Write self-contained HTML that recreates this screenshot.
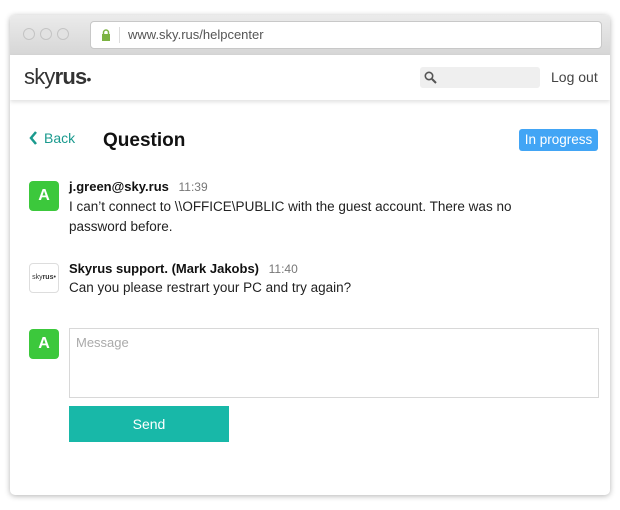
<!DOCTYPE html>
<html><head><style>
*{box-sizing:border-box;margin:0;padding:0}
body{width:620px;height:510px;background:#fff;font-family:"Liberation Sans",sans-serif;position:relative;overflow:hidden}
.win{position:absolute;left:10px;top:15px;width:600px;height:480px;background:#fff;border-radius:5px;box-shadow:0 1px 6px rgba(0,0,0,.3);overflow:hidden}
.tb{position:absolute;left:0;top:0;width:600px;height:40px;background:linear-gradient(#ebebeb,#d6d6d6)}
.dot{position:absolute;top:13px;width:12px;height:12px;border-radius:50%;border:1px solid #c4c4c4;background:#e2e2e2}
.addr{position:absolute;left:80px;top:6px;width:512px;height:28px;background:#fff;border:1px solid #c8c8c8;border-radius:4px;font-size:13px;color:#555;line-height:26px;padding-left:37px}
.hdr{position:absolute;left:0;top:40px;width:600px;height:45px;background:#fff;box-shadow:0 2px 4px rgba(0,0,0,.12)}
.t{position:absolute;white-space:nowrap}
.av{position:absolute;width:30px;height:30px;border-radius:4px;background:#3cc83c;color:#fff;font-weight:bold;font-size:16px;text-align:center;line-height:30px}
</style></head><body>
<div class="win">
<div class="tb">
<div class="dot" style="left:13px"></div><div class="dot" style="left:30px"></div><div class="dot" style="left:47px"></div>
<div class="addr">www.sky.rus/helpcenter
<svg style="position:absolute;left:10px;top:7px" width="10" height="12"><path d="M2.5 5V3.5a2.5 2.5 0 015 0V5" stroke="#7cb342" stroke-width="1.5" fill="none"/><rect x="1" y="5" width="8" height="7" fill="#7cb342"/></svg>
<div style="position:absolute;left:28px;top:5px;width:1px;height:16px;background:#ddd"></div></div>
</div>
<div class="hdr">
<div class="t" style="left:14px;top:9px;font-size:22px;color:#333;letter-spacing:-0.8px">sky<span style="font-weight:bold">rus</span><span style="font-size:14px">•</span></div>
<div style="position:absolute;left:410px;top:12px;width:120px;height:21px;background:#efefef;border-radius:3px"><svg style="position:absolute;left:4px;top:4px" width="13" height="13"><circle cx="5" cy="5" r="3.7" stroke="#555" stroke-width="1.6" fill="none"/><path d="M8 8l4 4" stroke="#555" stroke-width="2"/></svg></div>
<div class="t" style="left:541px;top:14px;font-size:14px;color:#444">Log out</div>
</div>
<svg style="position:absolute;left:18px;top:115px" width="10" height="16"><path d="M8 2L3 8l5 6" stroke="#1a9a8e" stroke-width="2.5" fill="none"/></svg>
<div class="t" style="left:34px;top:115px;font-size:14px;color:#1a9a8e">Back</div>
<div class="t" style="left:93px;top:115px;font-size:19px;font-weight:bold;color:#111">Question</div>
<div class="t" style="left:509px;top:114px;width:79px;height:22px;background:#42a5f5;color:#fff;border-radius:3px;font-size:13.5px;line-height:22px;text-align:center">In progress</div>
<div class="av" style="left:19px;top:166px">A</div>
<div class="t" style="left:59px;top:164px;font-size:13px;font-weight:bold;color:#111">j.green@sky.rus <span style="font-weight:normal;color:#777;font-size:12px;margin-left:6px">11:39</span></div>
<div class="t" style="left:59px;top:182px;font-size:13.5px;color:#222;line-height:20px">I can’t connect to \\OFFICE\PUBLIC with the guest account. There was no<br>password before.</div>
<div style="position:absolute;left:19px;top:248px;width:30px;height:30px;border:1px solid #ddd;border-radius:4px;font-size:7px;color:#333;text-align:center;line-height:28px">sky<b>rus</b>•</div>
<div class="t" style="left:59px;top:246px;font-size:13px;font-weight:bold;color:#111">Skyrus support. (Mark Jakobs) <span style="font-weight:normal;color:#777;font-size:12px;margin-left:6px">11:40</span></div>
<div class="t" style="left:59px;top:265px;font-size:13.5px;color:#222">Can you please restrart your PC and try again?</div>
<div class="av" style="left:19px;top:314px">A</div>
<div style="position:absolute;left:59px;top:313px;width:530px;height:70px;border:1px solid #d8d8d8"><span class="t" style="left:6px;top:6px;font-size:13px;color:#aaa">Message</span></div>
<div style="position:absolute;left:59px;top:391px;width:160px;height:36px;background:#18b8a8;color:#fff;font-size:14px;text-align:center;line-height:36px">Send</div>
</div>
</body></html>
